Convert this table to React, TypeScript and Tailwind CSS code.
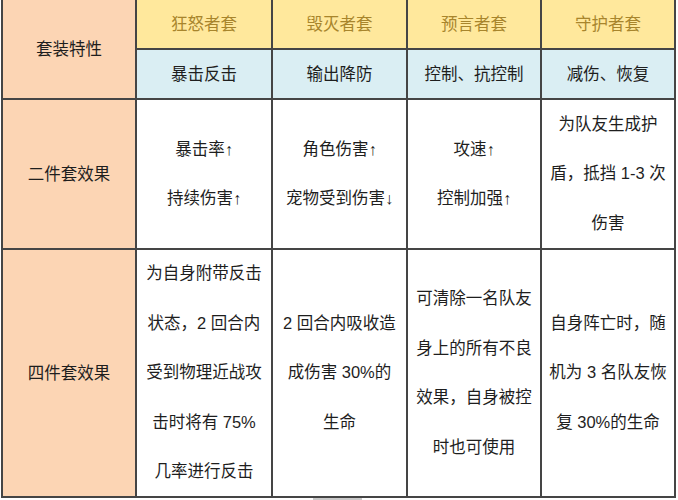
import React from 'react';

type Cell = { lines: string[] };

const sets = ['狂怒者套', '毁灭者套', '预言者套', '守护者套'];
const traits = ['暴击反击', '输出降防', '控制、抗控制', '减伤、恢复'];

const twoPiece: Cell[] = [
  { lines: ['暴击率↑', '持续伤害↑'] },
  { lines: ['角色伤害↑', '宠物受到伤害↓'] },
  { lines: ['攻速↑', '控制加强↑'] },
  { lines: ['为队友生成护', '盾，抵挡 1-3 次', '伤害'] },
];

const fourPiece: Cell[] = [
  { lines: ['为自身附带反击', '状态，2 回合内', '受到物理近战攻', '击时将有 75%', '几率进行反击'] },
  { lines: ['2 回合内吸收造', '成伤害 30%的', '生命'] },
  { lines: ['可清除一名队友', '身上的所有不良', '效果，自身被控', '时也可使用'] },
  { lines: ['自身阵亡时，随', '机为 3 名队友恢', '复 30%的生命'] },
];

function Body({ cell }: { cell: Cell }) {
  return (
    <div className="flex items-center justify-center bg-white text-center leading-[49.5px]">
      <div>
        {cell.lines.map((l, i) => (
          <div key={i} className="whitespace-nowrap">
            {l}
          </div>
        ))}
      </div>
    </div>
  );
}

export default function App() {
  return (
    <div className="min-h-[500px] bg-white font-['Liberation_Sans','Noto_Sans_CJK_SC',sans-serif] text-[16.5px] text-[#1e1e1e]">
      <div className="ml-px grid w-[675px] grid-cols-[132px_134px_133px_132px_132px] grid-rows-[48px_48px_148px_246px] gap-[2px] border-2 border-t-0 border-[#454545] bg-[#454545]">
        <div className="row-span-2 flex items-center justify-center bg-[#fcd5b4]">套装特性</div>
        {sets.map((s) => (
          <div key={s} className="flex items-center justify-center bg-[#ffe89c] text-[#a8852c]">
            {s}
          </div>
        ))}
        {traits.map((t) => (
          <div key={t} className="flex items-center justify-center bg-[#daeef3]">
            {t}
          </div>
        ))}

        <div className="flex items-center justify-center bg-[#fcd5b4]">二件套效果</div>
        {twoPiece.map((c, i) => (
          <Body key={i} cell={c} />
        ))}

        <div className="flex items-center justify-center bg-[#fcd5b4]">四件套效果</div>
        {fourPiece.map((c, i) => (
          <Body key={i} cell={c} />
        ))}
      </div>
      <div className="ml-[313px] h-[2px] w-[49px] bg-[#c9c9c9]" />
    </div>
  );
}
